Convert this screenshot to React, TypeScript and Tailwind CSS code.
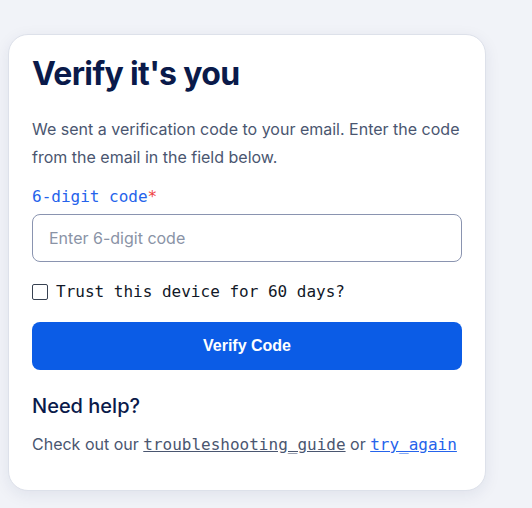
import React from "react";

export default function App() {
  const mono = { fontFamily: '"DejaVu Sans Mono", monospace' };
  return (
    <div className="min-h-[508px] w-[532px] bg-[#f1f3f8] pt-[34px] pl-[8px]" style={{ fontFamily: 'Inter, "Noto Sans", sans-serif' }}>
      <div className="w-[478px] rounded-[20px] border border-[#dde1ea] bg-white px-[23px] pt-[19px] pb-[33px] shadow-[0_4px_16px_rgba(30,40,90,0.08)]">
        <h1 className="text-[32px] font-bold leading-[40px] tracking-[-0.02em] text-[#0a1a4a]">Verify it's you</h1>
        <p className="mt-[21px] text-[16px] leading-[28px] text-[#4a5670]">
          We sent a verification code to your email. Enter the code from the email in the field below.
        </p>
        <label className="mt-[14px] block text-[16px] leading-[24px] text-[#2563eb]" style={mono}>
          6-digit code<span className="text-[#ef4444]">*</span>
        </label>
        <input
          className="mt-[5px] block h-[48px] w-[430px] rounded-[8px] border border-[#8a94b0] px-[16px] text-[16px] text-[#1e293b] placeholder:text-[#8a93a6] outline-none"
          placeholder="Enter 6-digit code"
        />
        <label className="mt-[20px] flex h-[20px] items-center gap-[8px]">
          <span className="block h-[16px] w-[16px] rounded-[2px] border border-[#374151] bg-white" />
          <span className="text-[16px] leading-[20px] text-[#111827]" style={mono}>Trust this device for 60 days?</span>
        </label>
        <button
          className="mt-[20px] flex h-[48px] w-[430px] items-center justify-center rounded-[8px] bg-[#0b5ce6] text-[16px] font-bold text-white"
          style={{ fontFamily: '"Liberation Sans", Arial, sans-serif' }}
        >
          Verify Code
        </button>
        <h2 className="mt-[22px] text-[20px] font-medium leading-[28px] text-[#0a1a4a]">Need help?</h2>
        <p className="mt-[12px] text-[16px] leading-[24px] text-[#4a5670]">
          Check out our{" "}
          <a className="underline text-[#4a5670]" style={mono}>troubleshooting_guide</a>{" "}
          or{" "}
          <a className="underline text-[#2563eb]" style={mono}>try_again</a>
        </p>
      </div>
    </div>
  );
}
